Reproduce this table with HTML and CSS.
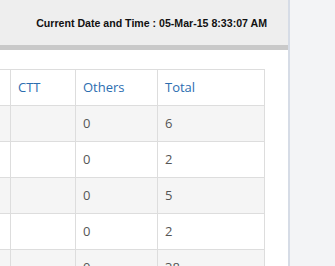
FILE: index.html
```html
<!DOCTYPE html>
<html>
<head>
<meta charset="utf-8">
<link rel="stylesheet" href="styles.css">
</head>
<body>
<div class="layout">
  <div class="main">
    <div class="topbar">Current Date and Time : 05-Mar-15 8:33:07 AM</div>
    <div class="content">
      <table class="grid">
        <thead>
          <tr><th class="lead"></th><th class="c-ctt">CTT</th><th class="c-oth">Others</th><th class="c-tot">Total</th></tr>
        </thead>
        <tbody>
          <tr><td class="lead"></td><td></td><td>0</td><td>6</td></tr>
          <tr><td class="lead"></td><td></td><td>0</td><td>2</td></tr>
          <tr><td class="lead"></td><td></td><td>0</td><td>5</td></tr>
          <tr><td class="lead"></td><td></td><td>0</td><td>2</td></tr>
          <tr><td class="lead"></td><td></td><td>0</td><td>38</td></tr>
        </tbody>
      </table>
    </div>
  </div>
  <div class="side"></div>
</div>
</body>
</html>
```
FILE: styles.css
```css
html, body {
  margin: 0;
  padding: 0;
  height: 100%;
  overflow: hidden;
}
body {
  font-family: "Open Sans", "Noto Sans", sans-serif;
  background: #f3f4f6;
}
.layout {
  display: flex;
  height: 266px;
}
.main {
  width: 288px;
  flex: none;
  background: #ffffff;
  border-right: 2px solid #d6dce6;
  overflow: hidden;
}
.side {
  flex: 1;
  background: #f3f4f6;
}
.topbar {
  height: 45px;
  background: #eeeeee;
  border-bottom: 5px solid #c9c9c9;
  box-sizing: content-box;
  display: flex;
  align-items: center;
  justify-content: flex-end;
  padding-right: 21px;
  font-family: "Liberation Sans", Arial, sans-serif;
  font-weight: bold;
  font-size: 10.6px;
  color: #111;
}
.content {
  padding-top: 19px;
}
.grid {
  border-collapse: collapse;
  table-layout: fixed;
  width: 264px;
  font-size: 13px;
}
.grid th, .grid td {
  border: 1px solid #dddddd;
  padding: 8px 7px 8px 7px;
  height: 19px;
  line-height: 19px;
  text-align: left;
  font-weight: normal;
}
.grid th {
  color: #2c6db0;
}
.grid td {
  color: #555555;
}
.grid .lead {
  width: 10px;
  border-left: none;
  padding: 0;
}
.grid .c-ctt { width: 50px; }
.grid .c-oth { width: 67px; }
.grid .c-tot { width: 92px; }
.grid tbody tr:nth-child(odd) td {
  background: #f5f5f5;
}
```
